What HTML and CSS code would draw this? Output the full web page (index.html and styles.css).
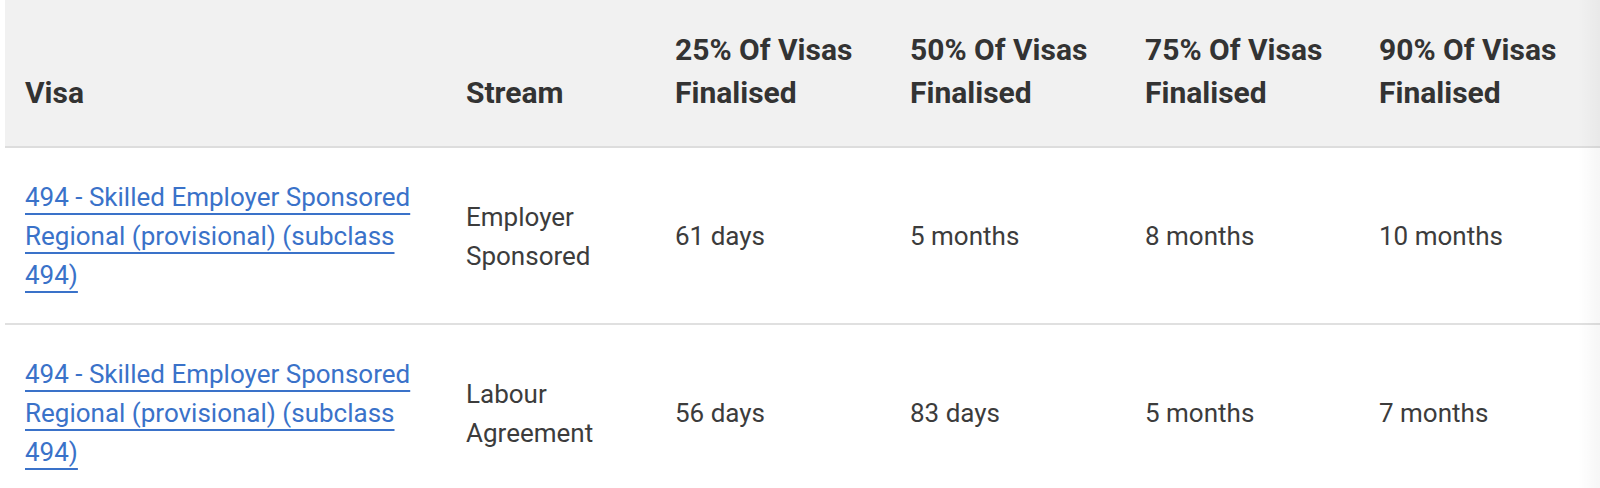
FILE: index.html
```html
<!DOCTYPE html>
<html lang="en">
<head>
<meta charset="utf-8">
<title>Visa processing times</title>
<link rel="stylesheet" href="styles.css">
</head>
<body>
<div class="wrap">
  <table class="times">
    <colgroup>
      <col class="c-visa">
      <col class="c-stream">
      <col class="c-p">
      <col class="c-p">
      <col class="c-p3">
      <col class="c-p4">
    </colgroup>
    <thead>
      <tr>
        <th>Visa</th>
        <th>Stream</th>
        <th>25% Of Visas Finalised</th>
        <th>50% Of Visas Finalised</th>
        <th>75% Of Visas Finalised</th>
        <th>90% Of Visas Finalised</th>
      </tr>
    </thead>
    <tbody>
      <tr>
        <td><a href="#">494 - Skilled Employer Sponsored Regional (provisional) (subclass 494)</a></td>
        <td>Employer Sponsored</td>
        <td>61 days</td>
        <td>5 months</td>
        <td>8 months</td>
        <td>10 months</td>
      </tr>
      <tr>
        <td><a href="#">494 - Skilled Employer Sponsored Regional (provisional) (subclass 494)</a></td>
        <td>Labour Agreement</td>
        <td>56 days</td>
        <td>83 days</td>
        <td>5 months</td>
        <td>7 months</td>
      </tr>
    </tbody>
  </table>
  <div class="edge-shadow"></div>
</div>
</body>
</html>
```

FILE: styles.css
```css
html, body {
  margin: 0;
  padding: 0;
  background: #ffffff;
}

body {
  font-family: Roboto, "Liberation Sans", Arial, sans-serif;
  color: #3a3a3a;
  overflow: hidden;
}

.wrap {
  position: relative;
  padding-left: 5px;
}

.times {
  border-collapse: collapse;
  table-layout: fixed;
  width: 1595px;
}

.c-visa { width: 441px; }
.c-stream { width: 209px; }
.c-p { width: 235px; }
.c-p3 { width: 234px; }
.c-p4 { width: 241px; }

.times th {
  background: #f1f1f1;
  color: #333333;
  font-weight: 700;
  font-size: 30px;
  line-height: 43px;
  text-align: left;
  vertical-align: bottom;
  padding: 28px 20px 32px 20px;
  border-bottom: 2px solid #dddddd;
}

.times td {
  font-size: 26px;
  line-height: 39px;
  vertical-align: middle;
  padding: 30px 20px 28px 20px;
  border-bottom: 2px solid #e0e0e0;
  color: #3c3c3c;
}

.times a {
  color: #3a72c9;
  text-decoration: underline;
  text-decoration-thickness: 2px;
  text-underline-offset: 7px;
  text-decoration-skip-ink: none;
}

.edge-shadow {
  position: absolute;
  top: 0;
  right: 0;
  width: 22px;
  height: 100%;
  background: linear-gradient(to right, rgba(0,0,0,0), rgba(0,0,0,0.035));
  pointer-events: none;
}
```
